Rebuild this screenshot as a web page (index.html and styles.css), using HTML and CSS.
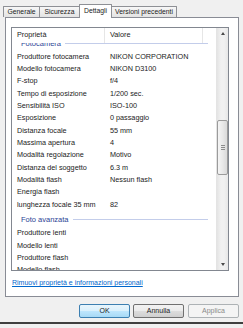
FILE: index.html
```html
<!DOCTYPE html>
<html lang="it">
<head>
  <meta charset="UTF-8">
  <meta name="viewport" content="width=device-width, initial-scale=1.0">
  <title>Proprietà - Dettagli</title>
  <link rel="stylesheet" href="styles.css">
</head>
<body>
  <!-- Tabs -->
  <div class="tabs">
    <div class="tab tab-generale">Generale</div>
    <div class="tab tab-sicurezza">Sicurezza</div>
    <div class="tab tab-dettagli tab-active">Dettagli</div>
    <div class="tab tab-versioni">Versioni precedenti</div>
  </div>

  <!-- Tab panel -->
  <div class="panel">
    <div class="list">
      <div class="list-main">
        <div class="list-head">
          <div class="head-prop">Proprietà</div>
          <div class="head-val">Valore</div>
          <div class="head-rest"></div>
        </div>
        <div class="list-body">
          <div class="list-scroll">
            <div class="group"><span>Fotocamera</span><span class="group-line"></span></div>
            <div class="row"><span class="prop">Produttore fotocamera</span><span class="val">NIKON CORPORATION</span></div>
            <div class="row"><span class="prop">Modello fotocamera</span><span class="val">NIKON D3100</span></div>
            <div class="row"><span class="prop">F-stop</span><span class="val">f/4</span></div>
            <div class="row"><span class="prop">Tempo di esposizione</span><span class="val">1/200 sec.</span></div>
            <div class="row"><span class="prop">Sensibilità ISO</span><span class="val">ISO-100</span></div>
            <div class="row"><span class="prop">Esposizione</span><span class="val">0 passaggio</span></div>
            <div class="row"><span class="prop">Distanza focale</span><span class="val">55 mm</span></div>
            <div class="row"><span class="prop">Massima apertura</span><span class="val">4</span></div>
            <div class="row"><span class="prop">Modalità regolazione</span><span class="val">Motivo</span></div>
            <div class="row"><span class="prop">Distanza del soggetto</span><span class="val">6.3 m</span></div>
            <div class="row"><span class="prop">Modalità flash</span><span class="val">Nessun flash</span></div>
            <div class="row"><span class="prop">Energia flash</span><span class="val"></span></div>
            <div class="row"><span class="prop">lunghezza focale 35 mm</span><span class="val">82</span></div>
            <div class="group"><span>Foto avanzata</span><span class="group-line"></span></div>
            <div class="row"><span class="prop">Produttore lenti</span><span class="val"></span></div>
            <div class="row"><span class="prop">Modello lenti</span><span class="val"></span></div>
            <div class="row"><span class="prop">Produttore flash</span><span class="val"></span></div>
            <div class="row"><span class="prop">Modello flash</span><span class="val"></span></div>
            <div class="row"><span class="prop">Numero di serie fotocamera</span><span class="val"></span></div>
          </div>
        </div>
      </div>

      <!-- Vertical scrollbar -->
      <div class="scrollbar">
        <div class="sb-btn"><span class="arrow-up"></span></div>
        <div class="sb-thumb">
          <span class="grip"></span>
          <span class="grip"></span>
          <span class="grip"></span>
        </div>
        <div class="sb-btn sb-btn-down"><span class="arrow-down"></span></div>
      </div>
    </div>

    <a class="link" href="#">Rimuovi proprietà e informazioni personali</a>
  </div>

  <!-- Dialog buttons -->
  <div class="buttons">
    <button class="btn btn-default">OK</button>
    <button class="btn">Annulla</button>
    <button class="btn btn-disabled" disabled>Applica</button>
  </div>
  <div class="bottom-edge"></div>
</body>
</html>
```

FILE: styles.css
```css
* {
  box-sizing: border-box;
}

body {
  margin: 0;
  width: 243px;
  height: 328px;
  overflow: hidden;
  background-color: #f0f0f0;
  font-family: "Liberation Sans", Arial, sans-serif;
  color: #1b1b1b;
}

/* Tabs */
.tabs {
  display: flex;
  align-items: flex-end;
  height: 17px;
  padding-left: 3px;
}

.tab {
  height: 11px;
  margin-right: -1px;
  border: 1px solid #8e9095;
  border-bottom: none;
  border-radius: 1px 1px 0 0;
  background: linear-gradient(#f7f7f7, #e3e3e3);
  font-size: 6.8px;
  line-height: 10px;
  text-align: center;
  white-space: nowrap;
}

.tab-generale { width: 37px; }
.tab-sicurezza { width: 41px; }
.tab-dettagli { width: 33px; }
.tab-versioni { width: 66px; }

.tab-active {
  position: relative;
  z-index: 1;
  height: 14px;
  margin-bottom: -1px;
  background: #fff;
  line-height: 11px;
}

/* Panel */
.panel {
  width: 234px;
  height: 280px;
  margin-left: 5px;
  padding: 9px 0 0 5px;
  border: 1px solid #898c95;
  background: #fff;
}

.list {
  display: flex;
  width: 218px;
  height: 244px;
  border: 1px solid #828790;
  background: #fff;
}

.list-main {
  display: flex;
  flex-direction: column;
  width: 204px;
}

.list-head {
  display: flex;
  height: 15px;
  font-size: 7.25px;
  line-height: 13px;
  background: #fff;
}

.head-prop {
  width: 93px;
  padding-left: 5px;
  border-right: 1px solid #e6e6e6;
}

.head-val {
  width: 98px;
  padding-left: 5px;
  border-right: 1px solid #e6e6e6;
}

.head-rest {
  flex: 1;
}

.list-body {
  flex: 1;
  overflow: hidden;
}

.list-scroll {
  margin-top: -8.5px;
}

.group {
  display: flex;
  align-items: center;
  height: 16px;
  padding: 1.5px 0 0 9px;
  color: #2a3f95;
  font-size: 7.5px;
}

.group-line {
  flex: 1;
  height: 1px;
  margin: 0 8px 0 4px;
  background: #c3cdea;
}

.row {
  display: flex;
  height: 12.36px;
  font-size: 7.25px;
  line-height: 12.36px;
  white-space: nowrap;
}

.prop {
  width: 93px;
  padding-left: 5px;
  overflow: hidden;
}

.val {
  padding-left: 5px;
}

/* Scrollbar */
.scrollbar {
  display: flex;
  flex-direction: column;
  width: 12px;
  border-left: 1px solid #e4e4e4;
  background: linear-gradient(to right, #e4e4e4, #f1f1f1 35%, #f1f1f1 65%, #e7e7e7);
}

.sb-btn {
  display: flex;
  align-items: center;
  justify-content: center;
  height: 11px;
}

.sb-btn-down {
  height: 12px;
  margin-top: auto;
}

.arrow-up {
  width: 0;
  height: 0;
  border-left: 2.5px solid transparent;
  border-right: 2.5px solid transparent;
  border-bottom: 3px solid #4a4a4a;
}

.arrow-down {
  width: 0;
  height: 0;
  border-left: 2.5px solid transparent;
  border-right: 2.5px solid transparent;
  border-top: 3px solid #4a4a4a;
}

.sb-thumb {
  display: flex;
  flex-direction: column;
  align-items: center;
  justify-content: center;
  gap: 1px;
  height: 55px;
  margin: 81px 0 0 0;
  border: 1px solid #9b9b9b;
  border-radius: 2px;
  background: linear-gradient(to right, #f5f5f5, #e9e9e9 50%, #dadada);
}

.grip {
  width: 4px;
  height: 1px;
  background: #8c8c8c;
}

/* Link */
.link {
  display: block;
  margin: 6px 0 0 1px;
  font-size: 7px;
  line-height: 12px;
  color: #0066cc;
  text-decoration: underline;
  white-space: nowrap;
}

/* Buttons */
.buttons {
  display: flex;
  gap: 3px;
  margin-top: 7px;
  padding-left: 79px;
}

.btn {
  width: 51px;
  height: 14px;
  padding: 0;
  border: 1px solid #707070;
  border-radius: 2px;
  background: linear-gradient(#f2f2f2, #ebebeb 50%, #dddddd 51%, #cfcfcf);
  font-family: "Liberation Sans", Arial, sans-serif;
  font-size: 7px;
  line-height: 12px;
  color: #1b1b1b;
}

.btn-default {
  border-color: #3c7fb1;
  background: linear-gradient(#e8f5fc, #d9f0fc 50%, #bee6fd 51%, #a7d9f5);
}

.btn-disabled {
  margin-left: 1px;
  border-color: #adb2b5;
  background: #f4f4f4;
  color: #8a8a8a;
}

.bottom-edge {
  height: 2px;
  margin-top: 4px;
  background: #3f3f3f;
}
```
